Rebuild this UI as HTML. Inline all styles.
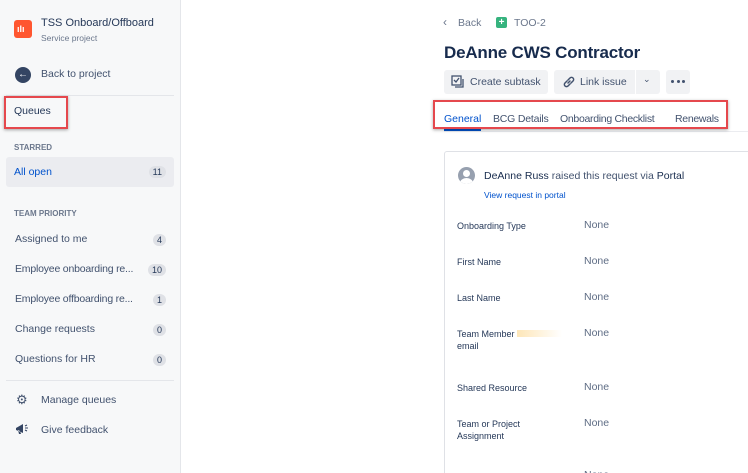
<!DOCTYPE html>
<html><head><style>
*{margin:0;padding:0;box-sizing:border-box}
html,body{width:748px;height:473px;overflow:hidden}
body{background:#fff;font-family:"Liberation Sans",sans-serif;color:#172b4d;position:relative}
.a{position:absolute;white-space:nowrap}
#side{position:absolute;left:0;top:0;width:181px;height:473px;background:#f7f8f9;border-right:1px solid #e4e6ea}
.s{font-size:10.5px;color:#42526e}
.badge{position:absolute;right:8px;background:#dfe1e6;border-radius:8px;font-size:9px;padding:1px 4px;color:#253858}
.lbl{font-size:9px;color:#253858}
.none{font-size:10.5px;color:#5e6c84}
.red{position:absolute;border:2px solid #e5484d;box-shadow:0 1px 3px rgba(0,0,0,.35)}
.btn{position:absolute;background:#f1f2f4;border-radius:3px;height:24px;top:70px;font-size:10.5px;color:#42526e}
.tab{font-size:10.5px;color:#42526e;top:113px}
</style></head><body>
<div id="side">
 <div class="a" style="left:14px;top:20px;width:18px;height:18px;background:#ff5630;border-radius:3px"></div>
 <div class="a" style="left:17px;top:24px;color:#fff;font-size:9px;font-weight:bold">ılı</div>
 <div class="a" style="left:41px;top:17px;font-size:11px;color:#253858">TSS Onboard/Offboard</div>
 <div class="a" style="left:41px;top:33px;font-size:8.5px;color:#6b778c">Service project</div>
 <div class="a" style="left:15px;top:67px;width:16px;height:16px;border-radius:50%;background:#344563;color:#fff;font-size:10px;text-align:center;line-height:16px">←</div>
 <div class="a s" style="left:41px;top:68px">Back to project</div>
 <div class="a" style="left:6px;top:95px;width:168px;height:1px;background:#e4e6ea"></div>
 <div class="a" style="left:14px;top:105px;font-size:10.5px;color:#253858">Queues</div>
 <div class="a" style="left:14px;top:143px;font-size:8px;font-weight:bold;color:#6b778c">STARRED</div>
 <div class="a" style="left:6px;top:157px;width:168px;height:30px;background:#ebecf0;border-radius:3px">
  <div class="a" style="left:8px;top:9px;font-size:10.5px;color:#0052cc">All open</div>
  <div class="badge" style="top:9px">11</div>
 </div>
 <div class="a" style="left:14px;top:209px;font-size:8px;font-weight:bold;color:#6b778c">TEAM PRIORITY</div>
 <div class="a" style="left:6px;top:233px;width:168px">
  <div class="a s" style="left:9px;top:0">Assigned to me</div><div class="badge" style="top:1px">4</div>
  <div class="a s" style="left:9px;top:30px;letter-spacing:-.2px">Employee onboarding re...</div><div class="badge" style="top:31px">10</div>
  <div class="a s" style="left:9px;top:60px;letter-spacing:-.2px">Employee offboarding re...</div><div class="badge" style="top:61px">1</div>
  <div class="a s" style="left:9px;top:90px">Change requests</div><div class="badge" style="top:91px">0</div>
  <div class="a s" style="left:9px;top:120px">Questions for HR</div><div class="badge" style="top:121px">0</div>
 </div>
 <div class="a" style="left:6px;top:380px;width:168px;height:1px;background:#e4e6ea"></div>
 <div class="a" style="left:16px;top:392px;font-size:13px;color:#42526e">⚙</div>
 <div class="a s" style="left:41px;top:394px">Manage queues</div>
 <svg class="a" style="left:15px;top:423px" width="14" height="12" viewBox="0 0 14 12"><path d="M1 5 L8 1 L8 10 L1 7 Z M3 7 L4 11 L6 11 L5 8 Z" fill="#344563"/><path d="M10 3 L12 2 M10 5 L13 5 M10 7 L12 8" stroke="#344563" stroke-width="1"/></svg>
 <div class="a s" style="left:41px;top:424px">Give feedback</div>
</div>
<div class="red" style="left:4px;top:96px;width:64px;height:33px"></div>

<div class="a" style="left:443px;top:15px;font-size:12px;color:#6b778c">‹</div>
<div class="a" style="left:458px;top:17px;font-size:10.5px;color:#6b778c">Back</div>
<div class="a" style="left:496px;top:17px;width:11px;height:11px;background:#36b37e;border-radius:2px;color:#fff;font-size:10px;line-height:11px;text-align:center;font-weight:bold">+</div>
<div class="a" style="left:514px;top:17px;font-size:10.5px;color:#6b778c">TOO-2</div>
<div class="a" style="left:444px;top:43px;font-size:17px;font-weight:bold;color:#172b4d;letter-spacing:-.2px">DeAnne CWS Contractor</div>
<div class="btn" style="left:444px;width:104px"><svg class="a" style="left:7px;top:5px" width="14" height="14" viewBox="0 0 14 14"><rect x="1" y="1" width="9" height="9" fill="none" stroke="#42526e" stroke-width="1.3"/><path d="M3 5 L5 7 L8 3" fill="none" stroke="#42526e" stroke-width="1.3"/><path d="M4 12 L12 12 L12 4" fill="none" stroke="#42526e" stroke-width="1.3"/></svg><span class="a" style="left:26px;top:6px">Create subtask</span></div>
<div class="btn" style="left:554px;width:106px"><svg class="a" style="left:8px;top:5px" width="14" height="14" viewBox="0 0 14 14"><path d="M6 8 L8 6 M5 6 L3 8 a2 2 0 0 0 3 3 L8 9 M9 8 L11 6 a2 2 0 0 0 -3 -3 L6 5" fill="none" stroke="#42526e" stroke-width="1.5" stroke-linecap="round"/></svg><span class="a" style="left:26px;top:6px">Link issue</span><span class="a" style="left:81px;top:0;width:1px;height:24px;background:#fff"></span><span class="a" style="left:89px;top:4px;font-size:9px">⌄</span></div>
<div class="btn" style="left:666px;width:24px"><span class="a" style="left:5px;top:10px;width:3px;height:3px;border-radius:50%;background:#42526e"></span><span class="a" style="left:10.5px;top:10px;width:3px;height:3px;border-radius:50%;background:#42526e"></span><span class="a" style="left:16px;top:10px;width:3px;height:3px;border-radius:50%;background:#42526e"></span></div>
<div class="a tab" style="left:444px;color:#0052cc">General</div>
<div class="a" style="left:444px;top:129px;width:37px;height:2px;background:#0052cc"></div>
<div class="a tab" style="left:493px;letter-spacing:-.2px">BCG Details</div>
<div class="a tab" style="left:560px;letter-spacing:-.3px">Onboarding Checklist</div>
<div class="a tab" style="left:675px;letter-spacing:-.3px">Renewals</div>
<div class="a" style="left:444px;top:131px;width:304px;height:1px;background:#ebecf0"></div>
<div class="red" style="left:433px;top:100px;width:295px;height:29px"></div>

<div class="a" style="left:444px;top:151px;width:310px;height:330px;border:1px solid #dfe1e6;border-radius:3px"></div>
<div class="a" style="left:458px;top:167px;width:17px;height:17px;border-radius:50%;background:#97a0af;overflow:hidden"><div class="a" style="left:5px;top:3px;width:7px;height:7px;border-radius:50%;background:#fff"></div><div class="a" style="left:2px;top:11px;width:13px;height:10px;border-radius:50%;background:#fff"></div></div>
<div class="a" style="left:484px;top:170px;font-size:10.5px;color:#172b4d">DeAnne Russ <span style="color:#42526e">raised this request via</span> Portal</div>
<div class="a" style="left:484px;top:190px;font-size:8.5px;color:#0052cc">View request in portal</div>

<div class="a lbl" style="left:457px;top:221px">Onboarding Type</div><div class="a none" style="left:584px;top:219px">None</div>
<div class="a lbl" style="left:457px;top:257px">First Name</div><div class="a none" style="left:584px;top:255px">None</div>
<div class="a lbl" style="left:457px;top:293px">Last Name</div><div class="a none" style="left:584px;top:291px">None</div>
<div class="a lbl" style="left:457px;top:329px">Team Member</div><div class="a" style="left:517px;top:330px;width:45px;height:7px;background:linear-gradient(90deg,#fde6b8,#fff)"></div>
<div class="a lbl" style="left:457px;top:341px">email</div><div class="a none" style="left:584px;top:327px">None</div>
<div class="a lbl" style="left:457px;top:383px">Shared Resource</div><div class="a none" style="left:584px;top:381px">None</div>
<div class="a lbl" style="left:457px;top:419px">Team or Project</div><div class="a lbl" style="left:457px;top:431px">Assignment</div><div class="a none" style="left:584px;top:417px">None</div>
<div class="a none" style="left:584px;top:469px">None</div>
</body></html>
